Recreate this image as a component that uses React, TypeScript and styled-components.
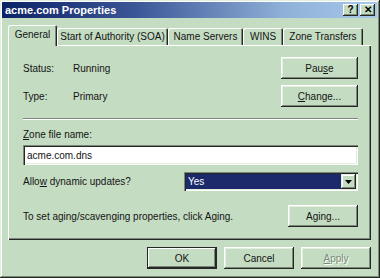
import React from "react";
import styled, { createGlobalStyle } from "styled-components";

const face = "#c4dcc2";
const light = "#e2eee0";
const hilite = "#ffffff";
const shadow = "#7a8a78";
const dark = "#262626";

const GlobalStyle = createGlobalStyle`
  html, body {
    margin: 0;
    padding: 0;
    background: ${face};
  }
  body {
    font-family: "Liberation Sans", Arial, sans-serif;
    font-size: 10px;
    color: #141414;
  }
`;

const Window = styled.div`
  width: 380px;
  height: 278px;
  box-sizing: border-box;
  padding: 2px 3px 3px 2px;
  background: ${face};
  box-shadow: inset -1px -1px ${dark}, inset 1px 1px ${light},
    inset -2px -2px ${shadow}, inset 2px 2px ${hilite};
  display: flex;
  flex-direction: column;
`;

const TitleBar = styled.div`
  height: 16px;
  display: flex;
  align-items: center;
  padding: 0 2px 0 3px;
  background: linear-gradient(to right, #0c2266 0%, #3a5596 35%, #8fb0d8 75%, #a8c8ec 100%);
`;

const Title = styled.span`
  color: #fff;
  font-weight: bold;
  font-size: 11px;
  flex: 1;
`;

const CaptionButton = styled.div`
  width: 15px;
  height: 12px;
  margin-left: 2px;
  box-sizing: border-box;
  background: ${face};
  box-shadow: inset -1px -1px ${dark}, inset 1px 1px ${hilite},
    inset -2px -2px ${shadow};
  display: flex;
  align-items: center;
  justify-content: center;
  font-weight: bold;
  font-size: 10px;
  line-height: 1;
  color: #000;
`;

const Body = styled.div`
  display: flex;
  flex-direction: column;
  padding: 7px 6px 0 6px;
`;

const TabRow = styled.div`
  height: 20px;
  display: flex;
  align-items: flex-end;
`;

const Tab = styled.div<{ $w: number; $active?: boolean }>`
  position: relative;
  z-index: ${(p) => (p.$active ? 2 : 1)};
  width: ${(p) => p.$w}px;
  height: ${(p) => (p.$active ? 21 : 17)}px;
  margin-bottom: ${(p) => (p.$active ? -1 : 0)}px;
  box-sizing: border-box;
  background: ${face};
  border-radius: 2px 2px 0 0;
  box-shadow: inset 1px 1px ${hilite}, inset -1px 0 ${dark},
    inset -2px 0 ${shadow};
  display: flex;
  align-items: center;
  justify-content: center;
  padding-bottom: ${(p) => (p.$active ? 3 : 0)}px;
  white-space: nowrap;
`;

const Panel = styled.div`
  height: 195px;
  box-sizing: border-box;
  padding: 12px 13px 0 15px;
  box-shadow: inset 1px 1px ${hilite}, inset -1px -1px ${dark},
    inset -2px -2px ${shadow};
  display: flex;
  flex-direction: column;
`;

const Row = styled.div<{ $h: number; $mt?: number }>`
  height: ${(p) => p.$h}px;
  margin-top: ${(p) => p.$mt ?? 0}px;
  display: flex;
  align-items: center;
`;

const Label = styled.span<{ $w?: number }>`
  width: ${(p) => (p.$w ? `${p.$w}px` : "auto")};
  white-space: nowrap;
`;

const Grow = styled.div`
  flex: 1;
`;

const Button = styled.div<{ $w: number; $h?: number; $default?: boolean; $disabled?: boolean }>`
  width: ${(p) => p.$w}px;
  height: ${(p) => p.$h ?? 22}px;
  box-sizing: border-box;
  background: ${face};
  box-shadow: ${(p) =>
    p.$default
      ? `inset 0 0 0 1px ${dark}, inset -2px -2px ${dark}, inset 2px 2px ${hilite}, inset -3px -3px ${shadow}`
      : `inset -1px -1px ${dark}, inset 1px 1px ${hilite}, inset -2px -2px ${shadow}, inset 2px 2px ${light}`};
  display: flex;
  align-items: center;
  justify-content: center;
  color: ${(p) => (p.$disabled ? shadow : "#141414")};
  text-shadow: ${(p) => (p.$disabled ? `1px 1px ${hilite}` : "none")};
  white-space: nowrap;
`;

const Separator = styled.div<{ $mt: number }>`
  margin-top: ${(p) => p.$mt}px;
  height: 0;
  border-top: 1px solid ${shadow};
  border-bottom: 1px solid ${hilite};
`;

const FieldLabel = styled.div<{ $mt: number }>`
  margin-top: ${(p) => p.$mt}px;
  height: 12px;
  line-height: 12px;
`;

const Sunken = styled.div<{ $w?: number; $h: number; $mt?: number }>`
  width: ${(p) => (p.$w ? `${p.$w}px` : "auto")};
  height: ${(p) => p.$h}px;
  margin-top: ${(p) => p.$mt ?? 0}px;
  box-sizing: border-box;
  padding: 2px;
  background: ${hilite};
  box-shadow: inset 1px 1px ${shadow}, inset 2px 2px ${dark},
    inset -1px -1px ${hilite}, inset -2px -2px ${light};
  display: flex;
  align-items: center;
`;

const InputText = styled.span`
  padding-left: 2px;
`;

const Selected = styled.div`
  flex: 1;
  align-self: stretch;
  background: #1c2a6c;
  color: #fff;
  display: flex;
  align-items: center;
  padding-left: 2px;
`;

const ArrowButton = styled.div`
  width: 15px;
  align-self: stretch;
  box-sizing: border-box;
  background: ${face};
  box-shadow: inset -1px -1px ${dark}, inset 1px 1px ${light},
    inset -2px -2px ${shadow}, inset 2px 2px ${hilite};
  display: flex;
  align-items: center;
  justify-content: center;
`;

const Footer = styled.div`
  margin-top: 7px;
  display: flex;
  justify-content: flex-end;
  gap: 7px;
`;

const tabs = [
  { label: "General", w: 49, active: true },
  { label: "Start of Authority (SOA)", w: 111 },
  { label: "Name Servers", w: 75 },
  { label: "WINS", w: 40 },
  { label: "Zone Transfers", w: 80 },
];

export default function App() {
  return (
    <>
      <GlobalStyle />
      <Window>
        <TitleBar>
          <Title>acme.com Properties</Title>
          <CaptionButton>?</CaptionButton>
          <CaptionButton>✕</CaptionButton>
        </TitleBar>
        <Body>
          <TabRow>
            {tabs.map((t) => (
              <Tab key={t.label} $w={t.w} $active={t.active}>
                {t.label}
              </Tab>
            ))}
          </TabRow>
          <Panel>
            <Row $h={22}>
              <Label $w={50}>Status:</Label>
              <Label>Running</Label>
              <Grow />
              <Button $w={77}>
                <span>
                  Pau<u>s</u>e
                </span>
              </Button>
            </Row>
            <Row $h={22} $mt={6}>
              <Label $w={50}>Type:</Label>
              <Label>Primary</Label>
              <Grow />
              <Button $w={77}>
                <span>
                  <u>C</u>hange...
                </span>
              </Button>
            </Row>
            <Separator $mt={11} />
            <FieldLabel $mt={9}>
              <u>Z</u>one file name:
            </FieldLabel>
            <Sunken $h={20} $mt={4}>
              <InputText>acme.com.dns</InputText>
            </Sunken>
            <Row $h={19} $mt={7}>
              <Label>
                Allo<u>w</u> dynamic updates?
              </Label>
              <Grow />
              <Sunken $w={174} $h={19}>
                <Selected>Yes</Selected>
                <ArrowButton>
                  <svg width="7" height="4" viewBox="0 0 7 4">
                    <path d="M0 0h7L3.5 4z" fill="#000" />
                  </svg>
                </ArrowButton>
              </Sunken>
            </Row>
            <Row $h={22} $mt={14}>
              <Label>To set aging/scavenging properties, click Aging.</Label>
              <Grow />
              <Button $w={70}>Aging...</Button>
            </Row>
          </Panel>
          <Footer>
            <Button $w={70} $default>
              OK
            </Button>
            <Button $w={70}>Cancel</Button>
            <Button $w={70} $disabled>
              <span>
                <u>A</u>pply
              </span>
            </Button>
          </Footer>
        </Body>
      </Window>
    </>
  );
}
